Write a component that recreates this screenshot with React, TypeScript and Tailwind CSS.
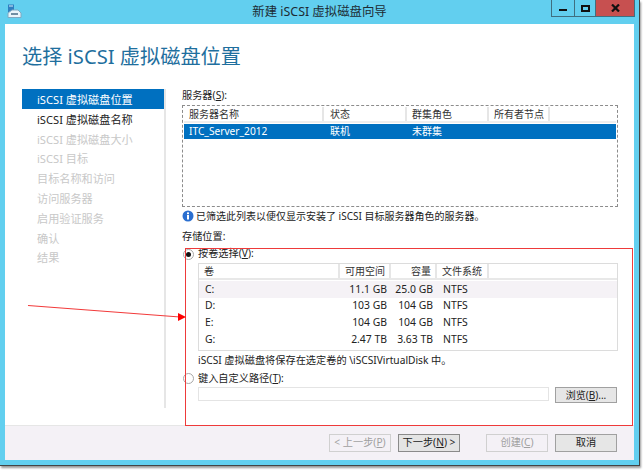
const FONT = "font-['Noto_Sans','Noto_Sans_CJK_SC',sans-serif]";

const navItems = [
  { label: "iSCSI 虚拟磁盘位置", state: "active" },
  { label: "iSCSI 虚拟磁盘名称", state: "normal" },
  { label: "iSCSI 虚拟磁盘大小", state: "off" },
  { label: "iSCSI 目标", state: "off" },
  { label: "目标名称和访问", state: "off" },
  { label: "访问服务器", state: "off" },
  { label: "启用验证服务", state: "off" },
  { label: "确认", state: "off" },
  { label: "结果", state: "off" },
];

const volumes = [
  { name: "C:", free: "11.1 GB", size: "25.0 GB", fs: "NTFS" },
  { name: "D:", free: "103 GB", size: "104 GB", fs: "NTFS" },
  { name: "E:", free: "104 GB", size: "104 GB", fs: "NTFS" },
  { name: "G:", free: "2.47 TB", size: "3.63 TB", fs: "NTFS" },
];

function Radio({ checked }: { checked?: boolean }) {
  return (
    <span className="ml-px flex h-[11px] w-[11px] shrink-0 items-center justify-center rounded-full border border-[#a8a8a8] bg-white">
      {checked && <span className="h-[5px] w-[5px] rounded-full bg-[#111]" />}
    </span>
  );
}

function FooterButton({ label, disabled, focus }: { label: React.ReactNode; disabled?: boolean; focus?: boolean }) {
  return (
    <div
      className={`flex h-[18px] w-[62px] items-center justify-center border whitespace-nowrap ${
        disabled
          ? "border-[#d0d0d0] bg-[#f4f1f6] text-[#a0a0a0]"
          : focus
            ? "border-[#8a8a8a] bg-[#e4e4e4] text-[#222]"
            : "border-[#a0a0a0] bg-[#e6e6e6] text-[#222]"
      }`}
    >
      {label}
    </div>
  );
}

function ServerTable() {
  return (
    <div className="h-[102px] w-[436px] border border-dashed border-[#8c8c8c] p-px">
      <div className="flex h-[16px] items-center border-b-2 border-[#eeeeee] whitespace-nowrap text-[10px] text-[#333]">
        <div className="h-full w-[140px] border-r-2 border-[#e6e6e6] pl-[5px] leading-[15px]">服务器名称</div>
        <div className="h-full w-[83px] border-r-2 border-[#e6e6e6] pl-[6px] leading-[15px]">状态</div>
        <div className="h-full w-[82px] border-r-2 border-[#e6e6e6] pl-[5px] leading-[15px]">群集角色</div>
        <div className="h-full w-[61px] border-r-2 border-[#e6e6e6] pl-[5px] leading-[15px]">所有者节点</div>
      </div>
      <div className="mt-px flex h-[15px] items-center bg-[#0070c0] text-[10.2px] leading-[15px] whitespace-nowrap text-white">
        <div className="w-[140px] pl-[5px]">ITC_Server_2012</div>
        <div className="w-[83px] pl-[6px] text-[10px]">联机</div>
        <div className="w-[82px] pl-[5px] text-[10px]">未群集</div>
      </div>
    </div>
  );
}

function VolumeTable() {
  return (
    <div className="ml-[16px] h-[88px] w-[420px] border border-[#dcdcdc]">
      <div className="flex h-[16px] border-b-2 border-[#e8e8e8] text-[10px] leading-[14px] whitespace-nowrap text-[#333]">
        <div className="w-[141px] border-r-2 border-[#e6e6e6] pl-[5px]">卷</div>
        <div className="w-[51px] border-r-2 border-[#e6e6e6] pl-[5px]">可用空间</div>
        <div className="w-[46px] border-r-2 border-[#e6e6e6] pr-[4px] text-right">容量</div>
        <div className="w-[52px] border-r-2 border-[#e6e6e6] pl-[5px]">文件系统</div>
      </div>
      {volumes.map((v, i) => (
        <div
          key={v.name}
          className={`flex h-[16.6px] items-center text-[10.4px] leading-[15px] whitespace-nowrap text-[#222] ${i === 0 ? "mt-px bg-[#f5f2f6]" : ""}`}
        >
          <div className="w-[141px] pl-[6px]">{v.name}</div>
          <div className="w-[47px] text-right">{v.free}</div>
          <div className="w-[46px] text-right">{v.size}</div>
          <div className="pl-[10px]">{v.fs}</div>
        </div>
      ))}
    </div>
  );
}

export default function App() {
  return (
    <div className={`relative h-[470px] w-[644px] overflow-hidden bg-white text-[10.2px] ${FONT}`}>
      <div className="flex h-[466px] w-[640px] flex-col border-r border-b border-[#444] bg-[#62cfef] px-[5px] pb-[5px] shadow-[1px_2px_2px_#999]">
        {/* title bar */}
        <div className="relative flex h-[24px] shrink-0 items-center justify-center">
          <svg className="absolute top-[4px] left-[2px]" width="15" height="14" viewBox="0 0 15 14">
            <rect x="1" y="0.5" width="6" height="8" fill="#2f7fc0" />
            <rect x="2" y="1.5" width="4" height="1" fill="#d8eefa" />
            <path d="M1 13.5 L1 9 L5 6 L11 6 L14 9 L14 13.5 Z" fill="#e8f4fa" stroke="#7fa9c2" />
            <rect x="4" y="9" width="7" height="2" fill="#6f8ea3" />
          </svg>
          <span className="text-[12.4px] text-[#1d2b33]">新建 iSCSI 虚拟磁盘向导</span>
          <div className="absolute top-0 right-[-1px] flex h-[17px] border border-t-0 border-[#3f6f80]">
            <div className="flex w-[23px] items-end justify-center border-r border-[#3f6f80] pb-[5px]">
              <span className="h-[2.5px] w-[8px] bg-[#111]" />
            </div>
            <div className="flex w-[21px] items-center justify-center border-r border-[#3f6f80]">
              <span className="h-[7px] w-[9px] border-2 border-[#111]" />
            </div>
            <div className="flex w-[38px] items-center justify-center bg-[#c75050]">
              <svg width="9" height="8" viewBox="0 0 9 8">
                <path d="M1 0.5 L8 7.5 M8 0.5 L1 7.5" stroke="#111" strokeWidth="2.2" />
              </svg>
            </div>
          </div>
        </div>

        <div className="flex flex-1 flex-col bg-white">
          <div className="flex h-[401px] shrink-0 flex-col pl-[17px]">
            <h1 className="mt-[17px] h-[48px] text-[20.2px] leading-[30px] font-normal text-[#1f6f9e]">
              选择 iSCSI 虚拟磁盘位置
            </h1>
            <div className="flex flex-1 pb-[17px]">
              {/* step list */}
              <div className="w-[144px] shrink-0 border-r-2 border-[#e6e6e6]">
                {navItems.map((item) => (
                  <div
                    key={item.label}
                    className={`h-[19.8px] w-[142px] pl-[15px] text-[11.15px] leading-[21px] ${
                      item.state === "active"
                        ? "bg-[#0070c0] text-white"
                        : item.state === "normal"
                          ? "text-[#222]"
                          : "text-[#c8c8c8]"
                    }`}
                  >
                    {item.label}
                  </div>
                ))}
              </div>

              {/* right pane */}
              <div className="ml-[16px] flex flex-col text-[#222]">
                <div className="mt-[-1px] h-[17px] leading-[15px]">
                  服务器(<span className="underline">S</span>):
                </div>
                <ServerTable />
                <div className="mt-[1px] flex h-[16px] items-center whitespace-nowrap text-[10px]">
                  <svg width="12" height="12" viewBox="0 0 12 12" className="mr-[2px] shrink-0">
                    <circle cx="6" cy="6" r="5.5" fill="#2a6fd0" />
                    <rect x="5" y="5" width="2" height="4.5" fill="#fff" />
                    <rect x="5" y="2.4" width="2" height="1.8" fill="#fff" />
                  </svg>
                  已筛选此列表以便仅显示安装了 iSCSI 目标服务器角色的服务器。
                </div>
                <div className="mt-[4px] h-[17px] leading-[16px]">存储位置:</div>
                <div className="flex h-[18px] items-center">
                  <Radio checked />
                  <span className="ml-[4px]">
                    按卷选择(<span className="underline">V</span>):
                  </span>
                </div>
                <VolumeTable />
                <div className="ml-[16px] h-[19px] leading-[18px]">
                  iSCSI 虚拟磁盘将保存在选定卷的 \iSCSIVirtualDisk 中。
                </div>
                <div className="flex h-[17px] items-center">
                  <Radio />
                  <span className="ml-[4px]">
                    键入自定义路径(<span className="underline">T</span>):
                  </span>
                </div>
                <div className="ml-[16px] flex gap-[6px]">
                  <div className="h-[14px] w-[351px] border border-[#e4e4e4] bg-white" />
                  <div className="flex h-[16px] w-[62px] items-center justify-center border border-[#a0a0a0] bg-[#e6e6e6] text-[10px]">
                    浏览(<span className="underline">B</span>)...
                  </div>
                </div>
              </div>
            </div>
          </div>

          {/* footer */}
          <div className="flex flex-1 items-start justify-end gap-[7px] border-t border-[#e6e6e6] bg-[#f4f1f6] pt-[8px] pr-[17px]">
            <FooterButton disabled label={<>&lt; 上一步(<span className="underline">P</span>)</>} />
            <FooterButton focus label={<>下一步(<span className="underline">N</span>) &gt;</>} />
            <div className="ml-[19px]">
              <FooterButton disabled label={<>创建(<span className="underline">C</span>)</>} />
            </div>
            <FooterButton label="取消" />
          </div>
        </div>
      </div>

      {/* red annotation */}
      <div className="absolute top-[248px] left-[185px] h-[178px] w-[448px] border border-[#ee3a3a]" />
      <svg className="absolute top-0 left-0" width="644" height="470" viewBox="0 0 644 470">
        <line x1="28" y1="305.5" x2="180" y2="317" stroke="#f23a3a" strokeWidth="1.1" />
        <polygon points="178,313 186,317 178,321" fill="#ff0000" />
      </svg>
    </div>
  );
}
